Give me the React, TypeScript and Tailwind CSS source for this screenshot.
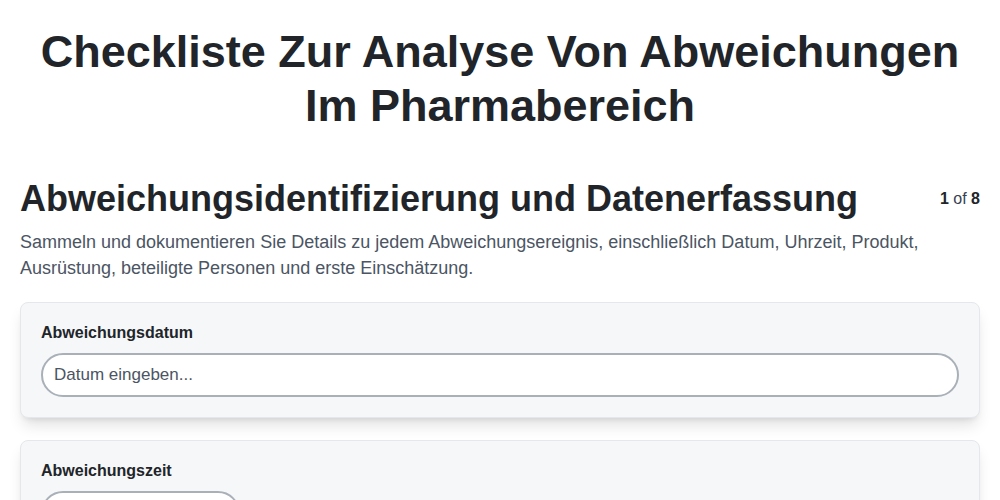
import React from "react";

export default function App() {
  return (
    <div className="min-h-screen bg-white px-5 pt-[25px] text-[#212529]" style={{ fontFamily: '"Liberation Sans", Arial, sans-serif' }}>
      <h1 className="mx-auto max-w-[940px] text-center text-[45px] font-bold leading-[54px]">
        Checkliste Zur Analyse Von Abweichungen Im Pharmabereich
      </h1>
      <div className="mt-[46px] flex items-center justify-between">
        <h2 className="text-[36px] font-bold leading-[40px]">Abweichungsidentifizierung und Datenerfassung</h2>
        <div className="text-[16px] leading-5 text-[#374151]">
          <span className="font-bold text-[#212529]">1</span> of <span className="font-bold text-[#212529]">8</span>
        </div>
      </div>
      <p className="mt-[10px] text-[18px] leading-[26px] text-[#4b5563]">
        Sammeln und dokumentieren Sie Details zu jedem Abweichungsereignis, einschließlich Datum, Uhrzeit, Produkt, Ausrüstung, beteiligte Personen und erste Einschätzung.
      </p>
      <div className="mt-[21px] flex flex-col gap-[22px]">
        <div className="rounded-lg border border-[#e5e7eb] bg-[#f6f7f9] p-5 shadow-[0_10px_15px_-3px_rgba(0,0,0,0.12),0_4px_6px_-4px_rgba(0,0,0,0.12)]">
          <label className="mb-[10px] block text-[16px] font-bold leading-5 text-[#212529]">Abweichungsdatum</label>
          <input
            type="text"
            placeholder="Datum eingeben..."
            className="block h-[44px] w-full rounded-full border-2 border-[#a9b0b8] bg-white px-[11px] text-[17px] text-[#212529] outline-none placeholder:text-[#4b5563]"
          />
        </div>
        <div className="rounded-lg border border-[#e5e7eb] bg-[#f6f7f9] p-5 shadow-[0_10px_15px_-3px_rgba(0,0,0,0.12),0_4px_6px_-4px_rgba(0,0,0,0.12)]">
          <label className="mb-[10px] block text-[16px] font-bold leading-5 text-[#212529]">Abweichungszeit</label>
          <input
            type="text"
            className="block h-[44px] w-[199px] rounded-full border-2 border-[#a9b0b8] bg-white px-[11px] text-[17px] outline-none"
          />
        </div>
      </div>
    </div>
  );
}
